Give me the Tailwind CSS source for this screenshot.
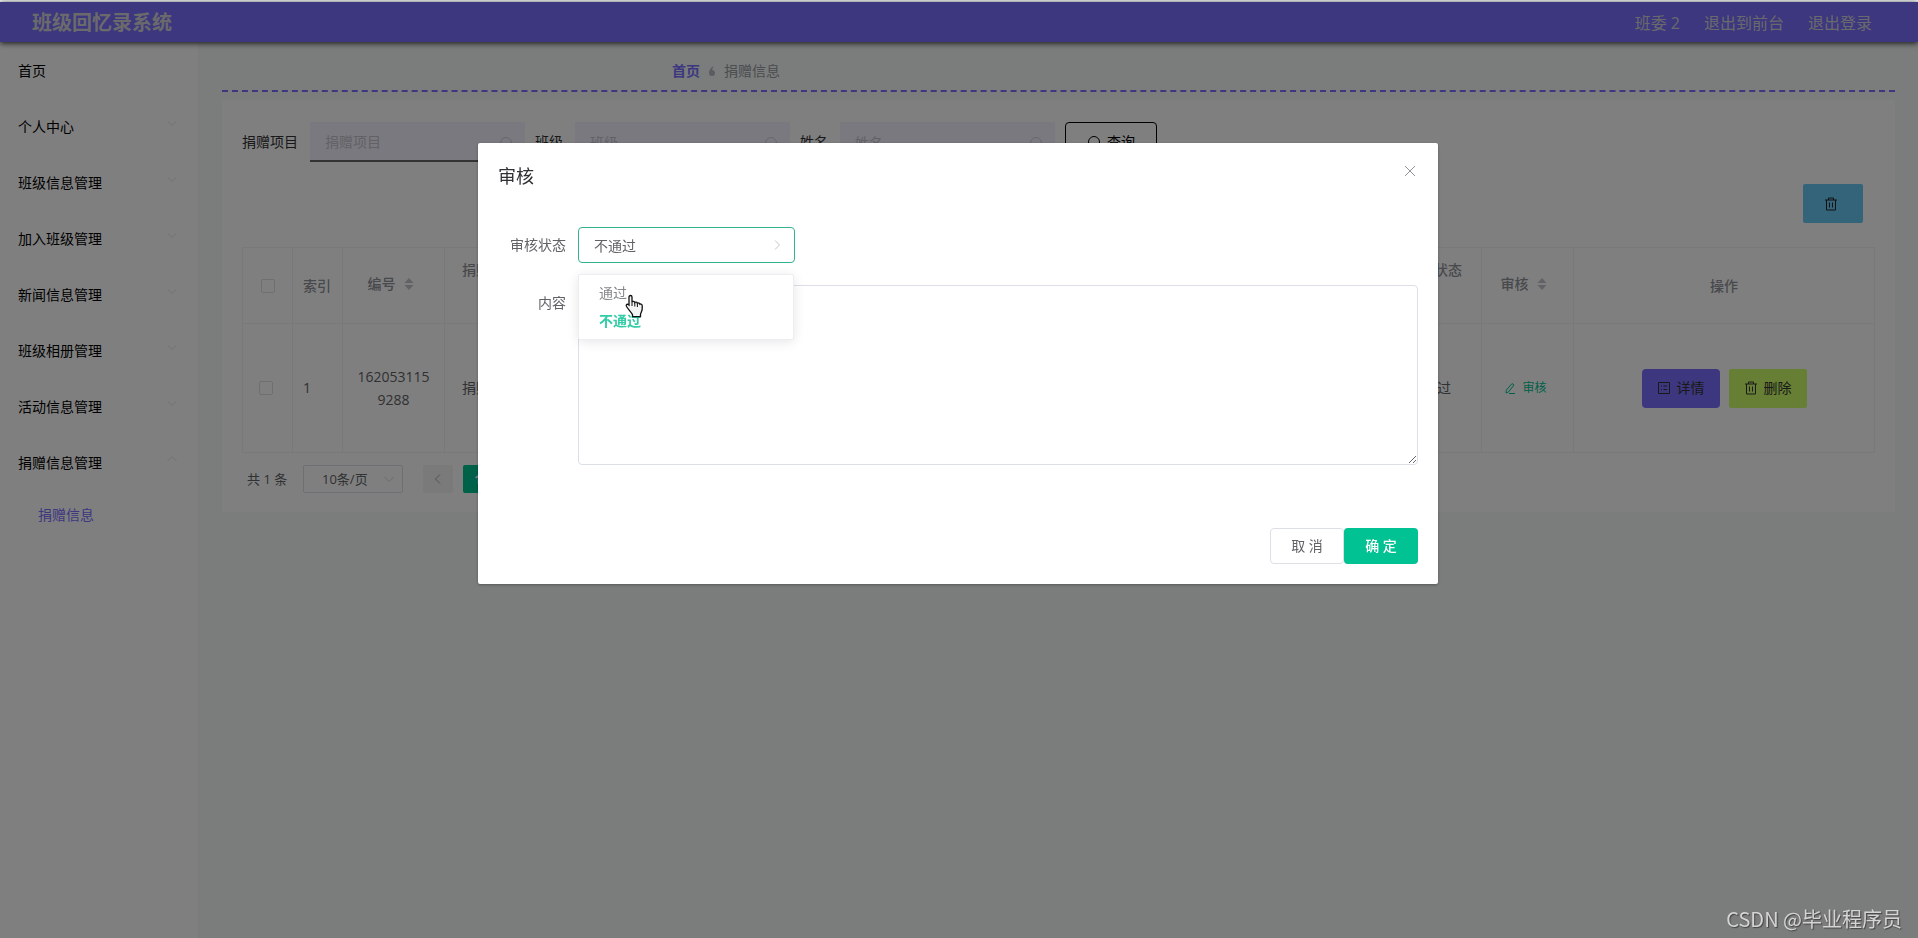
<!DOCTYPE html>
<html lang="zh-CN">
<head>
<meta charset="utf-8">
<meta name="viewport" content="width=device-width, initial-scale=1">
<title>班级回忆录系统</title>
<script src="https://cdn.jsdelivr.net/npm/@tailwindcss/browser@4"></script>
</head>
<body class="flex min-h-screen flex-col bg-[#f4faf8] pt-0.5 font-['Open_Sans','Noto_Sans_CJK_SC',sans-serif] text-sm text-[#606266]">

<svg class="hidden">
  <symbol id="down" viewBox="0 0 12 12"><path d="M1.5 4 6 8.5 10.5 4" fill="none" stroke="currentColor"/></symbol>
  <symbol id="trash" viewBox="0 0 14 14"><path d="M1 3h12M4.500 3V1h5v2M2.500 3v10h9V3M5.500 5.500v5M8.500 5.500v5" fill="none" stroke="currentColor"/></symbol>
  <symbol id="search" viewBox="0 0 14 14"><path d="M12.500 13.500 10.500 11M12.500 7A5.500 5.500 0 1 1 1.500 7a5.500 5.500 0 0 1 11 0Z" fill="none" stroke="currentColor"/></symbol>
  <symbol id="sort" viewBox="0 0 10 14"><path d="M5 1 9.500 6h-9ZM5 13 .5 8h9Z" fill="currentColor"/></symbol>
</svg>

<header class="relative z-10 flex h-10 items-center justify-between bg-[#796eff] pt-0.5 pr-[46px] pl-8 text-[#d4d4d8] shadow-[0_1px_6px_#222]">
  <h1 class="text-xl font-bold">班级回忆录系统</h1>
  <nav class="flex gap-6 text-base">
    <span>班委 2</span>
    <a href="#">退出到前台</a>
    <a href="#">退出登录</a>
  </nav>
</header>

<div class="flex flex-1">
  <aside class="w-[198px] shrink-0 bg-white pt-px text-black">
    <ul>
      <li><a href="#" class="flex h-14 items-center px-[18px]">首页</a></li>
      <li><a href="#" class="flex h-14 items-center justify-between pr-5 pl-[18px]">个人中心<svg class="mb-2 size-3 text-[#e2e3e6]"><use href="#down"/></svg></a></li>
      <li><a href="#" class="flex h-14 items-center justify-between pr-5 pl-[18px]">班级信息管理<svg class="mb-2 size-3 text-[#e2e3e6]"><use href="#down"/></svg></a></li>
      <li><a href="#" class="flex h-14 items-center justify-between pr-5 pl-[18px]">加入班级管理<svg class="mb-2 size-3 text-[#e2e3e6]"><use href="#down"/></svg></a></li>
      <li><a href="#" class="flex h-14 items-center justify-between pr-5 pl-[18px]">新闻信息管理<svg class="mb-2 size-3 text-[#e2e3e6]"><use href="#down"/></svg></a></li>
      <li><a href="#" class="flex h-14 items-center justify-between pr-5 pl-[18px]">班级相册管理<svg class="mb-2 size-3 text-[#e2e3e6]"><use href="#down"/></svg></a></li>
      <li><a href="#" class="flex h-14 items-center justify-between pr-5 pl-[18px]">活动信息管理<svg class="mb-2 size-3 text-[#e2e3e6]"><use href="#down"/></svg></a></li>
      <li>
        <a href="#" class="flex h-14 items-center justify-between pr-5 pl-[18px]">捐赠信息管理<svg class="mb-2 size-3 rotate-180 text-[#e2e3e6]"><use href="#down"/></svg></a>
        <a href="#" class="flex h-12 items-center pl-[38px] text-[#796eff]">捐赠信息</a>
      </li>
    </ul>
  </aside>

  <main class="min-w-0 flex-1 pr-[23px] pl-6">
    <nav class="flex h-[50px] items-center gap-2 border-b-2 border-dashed border-[#796eff] pt-2.5 pl-[450px]">
      <a href="#" class="font-bold text-[#796eff]">首页</a>
      <svg class="h-3 w-2" viewBox="0 0 8 12"><path d="M5.500 1C2.500 3 1 5 1 8a3 3 0 0 0 6 0c0-2-1.500-3-3-3Z" fill="#b4b8c0"/></svg>
      <span class="text-[#979aa2]">捐赠信息</span>
    </nav>

    <section class="mt-2 bg-white px-5 pt-[22px] pb-[19px]">
      <form class="flex items-center gap-2.5">
        <div class="flex items-center gap-3">
          <label for="project" class="text-[#303133]">捐赠项目</label>
          <div class="relative">
            <input id="project" placeholder="捐赠项目" class="h-10 w-[215px] border-b-2 border-[#666] bg-[#f5f2ff] px-[15px] outline-none placeholder:text-[#c4c4cc]">
            <svg class="absolute top-3.5 right-3 size-3.5 text-[#cfcdd8]"><use href="#search"/></svg>
          </div>
        </div>
        <div class="flex items-center gap-3">
          <label for="class" class="text-[#303133]">班级</label>
          <div class="relative">
            <input id="class" placeholder="班级" class="h-10 w-[215px] bg-[#f5f2ff] px-[15px] outline-none placeholder:text-[#c4c4cc]">
            <svg class="absolute top-3.5 right-3 size-3.5 text-[#cfcdd8]"><use href="#search"/></svg>
          </div>
        </div>
        <div class="flex items-center gap-3">
          <label for="name" class="text-[#303133]">姓名</label>
          <div class="relative">
            <input id="name" placeholder="姓名" class="h-10 w-[215px] bg-[#f5f2ff] px-[15px] outline-none placeholder:text-[#c4c4cc]">
            <svg class="absolute top-3.5 right-3 size-3.5 text-[#cfcdd8]"><use href="#search"/></svg>
          </div>
        </div>
        <button type="button" class="flex h-10 w-[92px] items-center justify-center gap-1.5 rounded border border-black text-black"><svg class="size-3.5"><use href="#search"/></svg>查询</button>
      </form>

      <div class="mt-[22px] flex justify-end pr-3">
        <button type="button" aria-label="删除" class="flex h-[39px] w-[60px] items-center rounded-xs bg-[#69c9f5] pl-[21px] text-[#222]"><svg class="size-3.5"><use href="#trash"/></svg></button>
      </div>

      <table class="mt-6 w-full table-fixed border-collapse text-left">
        <colgroup>
          <col class="w-[50px]"><col class="w-[50px]"><col class="w-[102px]"><col class="w-[103px]"><col><col><col class="w-[103px]"><col class="w-[92px]"><col class="w-[301px]">
        </colgroup>
        <thead>
          <tr class="h-[76px] text-[#909399] [&>th]:border [&>th]:border-[#f2f3f6] [&>th]:font-medium">
            <th class="pl-[18px]"><input type="checkbox" aria-label="全选" class="block size-3.5 appearance-none rounded-xs border border-[#dcdfe6] bg-white"></th>
            <th class="pl-2.5">索引</th>
            <th><span class="flex items-center justify-center gap-2 pr-1.5 pb-1">编号<svg class="h-3.5 w-2.5 text-[#c0c4cc]"><use href="#sort"/></svg></span></th>
            <th class="pt-3 pl-[17px] align-top">捐赠项目</th>
            <th class="text-center">班级</th>
            <th class="text-center">姓名</th>
            <th class="pt-3 pr-[19px] text-right align-top">审核状态</th>
            <th><span class="flex items-center justify-center gap-2 pr-2 pb-1">审核<svg class="h-3.5 w-2.5 text-[#c0c4cc]"><use href="#sort"/></svg></span></th>
            <th class="text-center">操作</th>
          </tr>
        </thead>
        <tbody>
          <tr class="h-[129px] [&>td]:border [&>td]:border-[#f2f3f6]">
            <td class="pl-4"><input type="checkbox" aria-label="选择第1行" class="block size-3.5 appearance-none rounded-xs border border-[#dcdfe6] bg-white"></td>
            <td class="pl-2.5">1</td>
            <td class="px-3 text-center leading-[23px] break-all">1620531159288</td>
            <td class="pl-[17px]">捐赠项目</td>
            <td></td>
            <td></td>
            <td class="text-center">不通过</td>
            <td class="pr-1"><button type="button" class="mx-auto flex items-center gap-1.5 text-xs text-[#00c292]"><svg class="size-3" viewBox="0 0 12 12"><path d="M8 1.500 10 3 4.500 10 2 11l.300-2.800ZM5 11.500h6" fill="none" stroke="currentColor"/></svg>审核</button></td>
            <td>
              <div class="flex justify-center gap-[9px]">
                <button type="button" class="flex h-[39px] w-[78px] items-center justify-center gap-1.5 rounded bg-[#796eff] text-[#333]"><svg class="size-3.5" viewBox="0 0 14 14"><path d="M1.500 1.500h11v11h-11ZM4 5h1M6.500 5H10M4 8.500h1M6.500 8.500H10" fill="none" stroke="currentColor"/></svg>详情</button>
                <button type="button" class="flex h-[39px] w-[78px] items-center justify-center gap-1.5 rounded-xs bg-[#cdff69] text-[#333]"><svg class="size-3.5"><use href="#trash"/></svg>删除</button>
              </div>
            </td>
          </tr>
        </tbody>
      </table>

      <div class="mt-3 flex items-center pl-[5px] text-[13px]">
        <span class="w-14">共 1 条</span>
        <div class="relative">
          <select aria-label="每页条数" class="h-7 w-[100px] appearance-none rounded-xs border border-[#dcdfe6] bg-white pl-[18px] text-[13px]"><option>10条/页</option></select>
          <svg class="absolute top-2 right-2 size-3 text-[#d4d6da]"><use href="#down"/></svg>
        </div>
        <button type="button" aria-label="上一页" class="ml-5 flex h-7 w-[30px] items-center justify-center rounded-xs bg-[#f4f4f5]"><svg class="size-3 rotate-90 text-[#a0a4ac]"><use href="#down"/></svg></button>
        <button type="button" class="ml-2.5 h-7 w-[30px] rounded-xs bg-[#00c292] font-bold text-white">1</button>
        <button type="button" aria-label="下一页" class="ml-2.5 flex h-7 w-[30px] items-center justify-center rounded-xs bg-[#f4f4f5]"><svg class="size-3 -rotate-90 text-[#a0a4ac]"><use href="#down"/></svg></button>
      </div>
    </section>
  </main>
</div>

<div class="fixed inset-x-0 top-0.5 bottom-0 z-20 bg-black/50 pt-[15vh] pr-0.5">
  <div role="dialog" aria-labelledby="dialog-title" class="mx-auto w-[960px] max-w-full rounded-xs bg-white px-5 pt-5 pb-5 shadow-[0_1px_3px_rgba(0,0,0,0.3)]">
    <div class="flex items-start justify-between">
      <h2 id="dialog-title" class="text-lg leading-[26px] text-[#303133]">审核</h2>
      <button type="button" aria-label="关闭" class="text-[#909399]"><svg class="size-4" viewBox="0 0 16 16"><path d="m3 3 10 10M13 3 3 13" fill="none" stroke="currentColor"/></svg></button>
    </div>
    <form class="mt-[38px] flex flex-col gap-[22px]">
      <div class="flex">
        <label for="status" class="w-20 pr-3 text-right leading-9">审核状态</label>
        <div class="relative">
          <input id="status" readonly value="不通过" class="block h-9 w-[217px] rounded border border-[#33b28f] px-[15px] outline-none">
          <svg class="absolute top-3 right-3 size-3 -rotate-90 text-[#c0c4cc]"><use href="#down"/></svg>
          <ul role="listbox" class="absolute top-[47px] left-0 z-10 w-[216px] rounded-xs border border-[#eceef2] bg-white py-1 shadow-[0_2px_12px_rgba(0,0,0,0.1)]">
            <li role="option" class="px-5 leading-7 text-[#85878b]">通过</li>
            <li role="option" aria-selected="true" class="px-5 leading-7 font-bold text-[#32cca6]">不通过</li>
          </ul>
        </div>
      </div>
      <div class="flex">
        <label for="content" class="w-20 pr-3 text-right leading-9">内容</label>
        <textarea id="content" class="block h-[180px] flex-1 resize rounded border border-[#dcdfe6]"></textarea>
      </div>
    </form>
    <div class="mt-[63px] flex justify-end">
      <button type="button" class="h-9 w-[74px] rounded border border-[#dcdfe6] bg-white">取 消</button>
      <button type="button" class="h-9 w-[74px] rounded bg-[#00c292] font-medium text-white">确 定</button>
    </div>
  </div>
</div>

<!-- Pointer over the option list -->
<svg class="pointer-events-none fixed top-[294px] left-[624px] z-30 h-6 w-5" viewBox="0 0 20 24"><path d="M6.500 1.500c1 0 1.500.800 1.500 1.500v5c.500-1 2.500-.8 2.800.600.700-.8 2.300-.5 2.600.700.800-.7 2.300-.2 2.500.900.900-.5 2.300.100 2.300 1.400v3.500c0 2-1.500 3.500-1.700 5.500v2H8.500v-2C7 18 4 15 2.500 12.500 1.500 10.500 3.500 9.500 5 11V3c0-.8.500-1.500 1.500-1.500Z" fill="#f4f4f4" stroke="#111" stroke-width="1.300"/><path d="M8 8v4M10.800 9v3.500M13.400 9.500v3.500" stroke="#111" fill="none"/></svg>

<p class="fixed right-4 bottom-[5px] z-30 font-['Noto_Sans_CJK_SC',sans-serif] text-xl text-[#d4d4d4] [text-shadow:1px_1px_1px_#444]">CSDN @毕业程序员</p>

</body>
</html>
